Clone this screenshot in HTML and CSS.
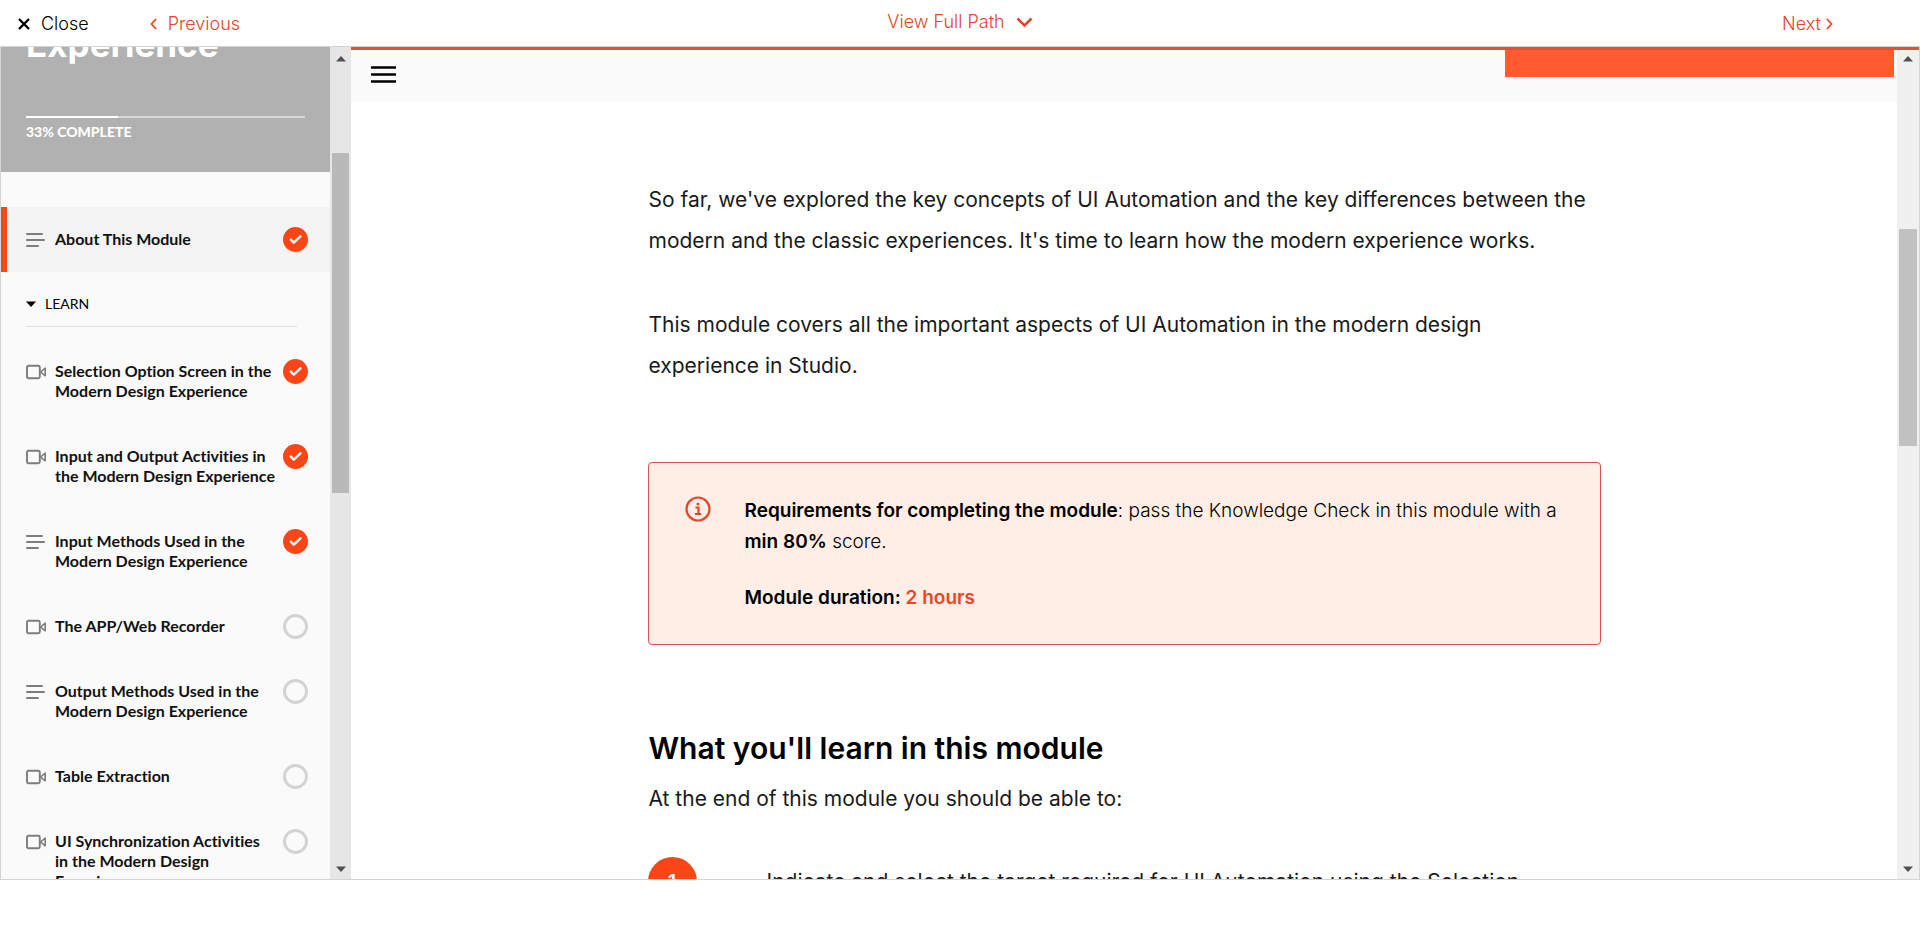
FILE: index.html
```html
<!DOCTYPE html>
<html lang="en">
<head>
<meta charset="utf-8">
<title>About This Module</title>
<link rel="stylesheet" href="styles.css">
</head>
<body>
<svg class="defs" aria-hidden="true">
  <symbol id="lines" viewBox="0 0 20 16"><path d="M1 2h15M1 8h17M1 14h11" fill="none" stroke="#7d7d7d" stroke-width="2" stroke-linecap="round"/></symbol>
  <symbol id="video" viewBox="0 0 20 16"><rect x="1" y="1.800" width="12.800" height="12.400" rx="1.500" fill="none" stroke="#7d7d7d" stroke-width="1.900"/><path d="M19.200 4.200v7.600L14.600 8z" fill="none" stroke="#7d7d7d" stroke-width="1.600" stroke-linejoin="round"/></symbol>
  <symbol id="done" viewBox="0 0 25 25"><circle cx="12.500" cy="12.500" r="12.500" fill="#fa4616"/><path d="M7.800 12.600l3 3 6.600-6.300" fill="none" stroke="#fff" stroke-width="2.400" stroke-linecap="round" stroke-linejoin="round"/></symbol>
  <symbol id="todo" viewBox="0 0 25 25"><circle cx="12.500" cy="12.500" r="11" fill="none" stroke="#d3d3d3" stroke-width="3"/></symbol>
  <symbol id="up" viewBox="0 0 10 6"><path d="M0 5.500h10L5 0z" fill="#505050"/></symbol>
  <symbol id="down" viewBox="0 0 10 6"><path d="M0 .5h10L5 6z" fill="#505050"/></symbol>
</svg>

<header class="topbar">
  <div class="leading">
    <a class="nav close" href="#"><svg width="12" height="12" viewBox="0 0 12 12"><path d="M1 1l10 10M11 1L1 11" stroke="#000" stroke-width="2.300"/></svg>Close</a>
    <a class="nav previous" href="#"><svg width="7" height="12" viewBox="0 0 7 12"><path d="M6 1L1.500 6 6 11" fill="none" stroke="#fa4616" stroke-width="1.800"/></svg>Previous</a>
  </div>
  <button class="nav path" type="button">View Full Path<svg width="17" height="11" viewBox="0 0 17 11"><path d="M1.500 1.500l7 7 7-7" fill="none" stroke="#e5452a" stroke-width="2.600"/></svg></button>
  <a class="nav next" href="#">Next<svg width="7" height="12" viewBox="0 0 7 12"><path d="M1 1l4.500 5L1 11" fill="none" stroke="#fa4616" stroke-width="1.800"/></svg></a>
</header>

<div class="frame">
  <aside class="sidebar">
    <div class="outline">
      <div class="hero">
        <h2 class="hero-title">Experience</h2>
        <div class="progress"><div class="progress-fill" style="width:33%"></div></div>
        <p class="progress-label">33% COMPLETE</p>
      </div>
      <nav class="lessons">
        <a class="lesson current" href="#"><svg class="kind"><use href="#lines"/></svg><span class="name">About This Module</span><svg class="state"><use href="#done"/></svg></a>
        <button class="section" type="button"><svg width="10" height="6" viewBox="0 0 10 6"><path d="M0 0.500h10L5 6z"/></svg>LEARN</button>
        <a class="lesson" href="#"><svg class="kind"><use href="#video"/></svg><span class="name">Selection Option Screen in the Modern Design Experience</span><svg class="state"><use href="#done"/></svg></a>
        <a class="lesson" href="#"><svg class="kind"><use href="#video"/></svg><span class="name">Input and Output Activities in the Modern Design Experience</span><svg class="state"><use href="#done"/></svg></a>
        <a class="lesson" href="#"><svg class="kind"><use href="#lines"/></svg><span class="name">Input Methods Used in the Modern Design Experience</span><svg class="state"><use href="#done"/></svg></a>
        <a class="lesson" href="#"><svg class="kind"><use href="#video"/></svg><span class="name">The APP/Web Recorder</span><svg class="state"><use href="#todo"/></svg></a>
        <a class="lesson" href="#"><svg class="kind"><use href="#lines"/></svg><span class="name">Output Methods Used in the Modern Design Experience</span><svg class="state"><use href="#todo"/></svg></a>
        <a class="lesson" href="#"><svg class="kind"><use href="#video"/></svg><span class="name">Table Extraction</span><svg class="state"><use href="#todo"/></svg></a>
        <a class="lesson" href="#"><svg class="kind"><use href="#video"/></svg><span class="name">UI Synchronization Activities in&nbsp;the Modern Design Experience</span><svg class="state"><use href="#todo"/></svg></a>
      </nav>
    </div>
    <div class="scrollbar side-scroll"><svg class="arrow"><use href="#up"/></svg><div class="track"><div class="lead"></div><div class="thumb"></div><div class="rest"></div></div><svg class="arrow"><use href="#down"/></svg></div>
  </aside>

  <main class="page">
    <div class="page-view">
      <div class="toolbar">
        <button class="menu" type="button" aria-label="Toggle menu"><svg width="25" height="17" viewBox="0 0 25 17"><path d="M0 1.500h25M0 8.500h25M0 15.500h25" stroke="#000" stroke-width="2.700"/></svg></button>
        <div class="banner"></div>
      </div>
      <article class="content">
        <p class="body-text">So far, we've explored the key concepts of UI Automation and the key differences between the modern and the classic experiences. It's time to learn how the modern experience works.</p>
        <p class="body-text">This module covers all the important aspects of UI Automation in the modern design experience in Studio.</p>
        <section class="notice">
          <svg class="info" width="26" height="26" viewBox="0 0 26 26"><circle cx="13" cy="13" r="11.500" fill="none" stroke="#e5452a" stroke-width="2.200"/><circle cx="13" cy="8" r="1.500" fill="#e5452a"/><path d="M10.500 11.500H13.500V18M10 18h6.200" fill="none" stroke="#e5452a" stroke-width="2.200"/></svg>
          <div class="notice-text">
            <p><strong>Requirements for completing the module</strong>: pass the Knowledge Check in this module with a <strong>min 80%</strong> score.</p>
            <p><strong>Module duration: <span class="accent">2 hours</span></strong></p>
          </div>
        </section>
        <h1 class="heading">What you'll learn in this module</h1>
        <p class="body-text">At the end of this module you should be able to:</p>
        <ol class="goals">
          <li class="goal"><span class="badge">1</span><span class="body-text">Indicate and select the target required for UI Automation using the Selection</span></li>
        </ol>
      </article>
    </div>
    <div class="scrollbar page-scroll"><svg class="arrow"><use href="#up"/></svg><div class="track"><div class="lead"></div><div class="thumb"></div><div class="rest"></div></div><svg class="arrow"><use href="#down"/></svg></div>
  </main>
</div>
</body>
</html>
```
FILE: styles.css
```css
* { box-sizing: border-box; margin: 0; padding: 0; }
body {
  display: flex;
  flex-direction: column;
  height: 100vh;
  padding-bottom: 54px;
  overflow: hidden;
  background: #fff;
  color: #000;
  font-family: Inter, "Liberation Sans", sans-serif;
  font-weight: 300;
}
a { color: inherit; text-decoration: none; }
button { border: 0; background: none; font: inherit; color: inherit; }
.defs { position: absolute; width: 0; height: 0; }

.topbar {
  display: grid;
  grid-template-columns: 1fr auto 1fr;
  align-items: center;
  height: 46px;
  flex: none;
  padding: 2px 18px 0;
  font-size: 18px;
  line-height: 24px;
}
.leading { display: flex; gap: 61px; }
.nav { display: flex; align-items: center; color: #e5452a; }
.close { gap: 11px; color: #000; }
.previous { gap: 11px; }
.path { gap: 11px; padding-bottom: 4px; }
.next { gap: 5px; justify-self: end; margin-right: 69px; }

.frame {
  display: flex;
  flex: 1;
  min-height: 0;
  border: 1px solid #d4d4d4;
}

.sidebar { display: flex; flex: none; width: 350px; }
.outline {
  flex: 1;
  overflow: hidden;
  background: #fafafa;
  font-family: Lato, "Liberation Sans", sans-serif;
  font-variant-ligatures: none;
}
.hero { padding: 0 25px 30px; background: #b1b1b1; color: #fff; }
.hero-title {
  margin-top: -23px;
  padding-bottom: 52px;
  font-family: Inter, "Liberation Sans", sans-serif;
  font-size: 35px;
  line-height: 40px;
  font-weight: 700;
}
.progress { height: 2px; background: #d8d8d8; }
.progress-fill { height: 100%; background: #fff; }
.progress-label { padding-top: 4px; font-size: 14px; line-height: 20px; font-weight: 900; }

.lessons { padding-top: 35px; }
.lesson {
  display: grid;
  grid-template-columns: 20px 1fr 25px;
  column-gap: 9px;
  padding: 22px 22px 23px 25px;
  font-size: 16px;
  line-height: 20px;
  font-weight: 700;
  color: #111;
}
.current { padding-left: 19px; border-left: 6px solid #fa4616; background: #f3f3f3; }
.name { margin-right: -3px; }
.kind { width: 20px; height: 16px; margin-top: 3px; }
.state { width: 25px; height: 25px; margin: -2px 0 -5px; }
.section {
  display: flex;
  align-items: center;
  gap: 9px;
  width: 271px;
  margin: 0 0 12px 25px;
  padding: 22px 0 12px;
  border-bottom: 1px solid #e0e0e0;
  font-size: 14px;
  line-height: 20px;
  font-weight: 400;
}

.scrollbar {
  display: flex;
  flex-direction: column;
  align-items: center;
  flex: none;
  width: 22px;
  padding: 9px 0 7px;
  background: #f0f0f0;
}
.arrow { width: 10px; height: 6px; flex: none; }
.track { display: flex; flex-direction: column; flex: 1; width: 18px; }
.thumb { background: #b9b9b9; }
.side-scroll { width: 21px; background: #e6e6e6; }
.side-scroll .track { width: 17px; }
.side-scroll .lead { flex: 91; }
.side-scroll .thumb { flex: 340; }
.side-scroll .rest { flex: 373; }
.page-scroll { padding-top: 6px; }
.page-scroll .lead { flex: 167; }
.page-scroll .thumb { flex: 217; background: #c1c1c1; }
.page-scroll .rest { flex: 420; }

.page { display: flex; flex: 1; min-width: 0; border-top: 3px solid #e94f2b; }
.page-view { flex: 1; overflow: hidden; }
.toolbar {
  display: flex;
  justify-content: space-between;
  align-items: flex-start;
  height: 53px;
  padding: 0 3px 0 20px;
  background: #fbfbfb;
}
.menu { margin-top: 16px; line-height: 0; }
.banner { width: 389px; height: 27px; background: #ff5b2f; }

.content { max-width: 953px; margin: 0 auto; padding-top: 76px; }
.body-text { font-size: 21px; line-height: 41px; font-weight: 400; color: #1a1a1a; }
.content > .body-text { padding: 0 8px 0 1px; }
.content > .body-text + .body-text { margin-top: 43px; }
.notice {
  display: flex;
  gap: 34px;
  margin-top: 76px;
  padding: 32px 36px 31px;
  border: 1px solid #d9534f;
  border-radius: 4px;
  background: #feeee6;
}
.info { flex: none; margin-top: 1px; }
.notice-text { font-size: 19px; line-height: 31px; }
.notice-text p + p { margin-top: 25px; }
.notice strong { font-weight: 600; }
.accent { color: #f04524; }
.heading { margin-top: 83px; padding-left: 1px; font-size: 30px; line-height: 40px; font-weight: 600; }
.heading + .body-text { margin-top: 10px; }
.goals { margin-top: 38px; list-style: none; }
.goal { display: flex; align-items: center; gap: 70px; }
.badge {
  flex: none;
  width: 49px;
  height: 49px;
  border-radius: 50%;
  background: #fa4616;
  color: #fff;
  font-size: 19px;
  line-height: 49px;
  font-weight: 600;
  text-align: center;
}
```
